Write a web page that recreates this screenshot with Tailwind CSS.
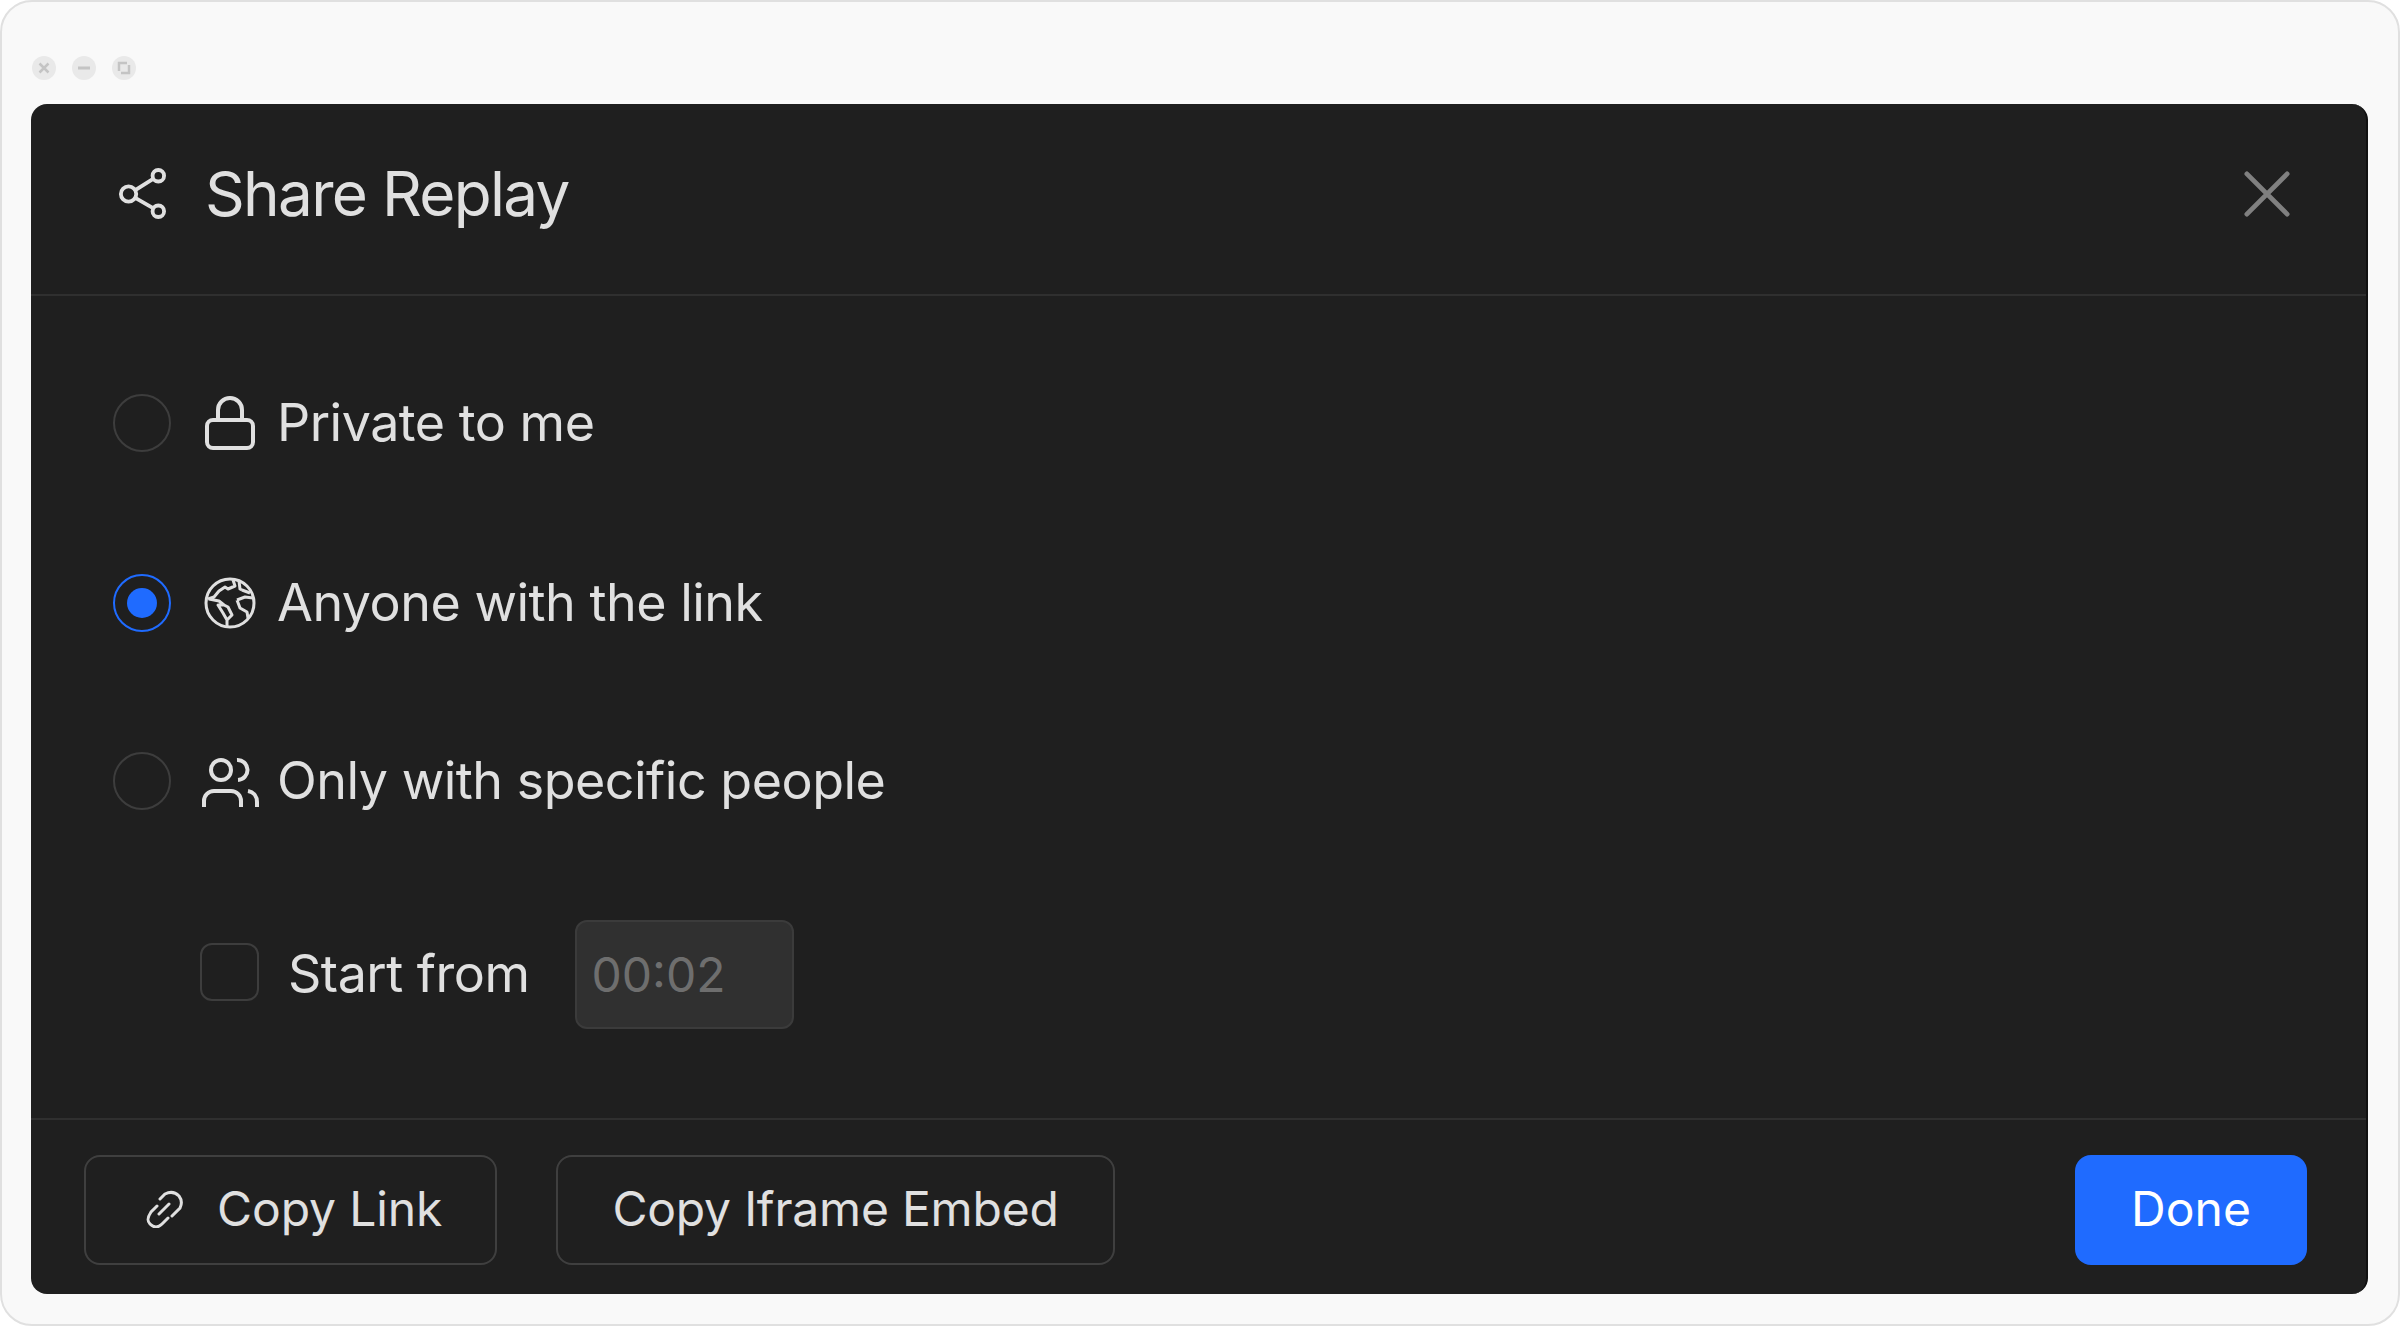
<!DOCTYPE html>
<html>
<head>
<meta charset="utf-8">
<script src="https://cdn.jsdelivr.net/npm/@tailwindcss/browser@4"></script>
</head>
<body class="bg-white font-['Inter',sans-serif]">
<div class="w-[2400px] h-[1326px] box-border bg-[#f9f9f9] border-2 border-[#e0e0e0] rounded-[32px] overflow-hidden flex flex-col">
  <div class="h-[102px] pl-[30px] pt-[54px] flex gap-4 items-start shrink-0">
    <svg width="24" height="24" viewBox="0 0 24 24" class="block"><circle cx="12" cy="12" r="12" fill="#e9e9e9"/><path d="M7.500 7.500l9 9M16.500 7.500l-9 9" stroke="#c4c4c4" stroke-width="2.500" fill="none"/></svg>
    <svg width="24" height="24" viewBox="0 0 24 24" class="block"><circle cx="12" cy="12" r="12" fill="#e9e9e9"/><path d="M6 12h12" stroke="#c4c4c4" stroke-width="3" fill="none"/></svg>
    <svg width="24" height="24" viewBox="0 0 24 24" class="block"><circle cx="12" cy="12" r="12" fill="#e9e9e9"/><path d="M15 7H7v8M9 17h8V9" stroke="#c4c4c4" stroke-width="2.500" fill="none"/></svg>
  </div>
  <div class="ml-[29px] w-[2337px] h-[1190px] bg-[#1f1f1f] rounded-[16px] border-r-2 border-r-[#111111] flex flex-col overflow-hidden shrink-0">
    <div class="h-[192px] shrink-0 border-b-2 border-[#2f2f2f] pl-[87px] pr-[76px] pb-[11px] flex items-center justify-between">
      <div class="flex items-center gap-[39px]">
        <svg width="48" height="54" viewBox="0 0 50 54" fill="none" stroke="#e0e0e0" stroke-width="4" class="block">
          <circle cx="42" cy="8" r="6"/><circle cx="11" cy="27" r="8"/><circle cx="42" cy="45" r="6"/>
          <path d="M18 23L37 11M18 31L37 42"/>
        </svg>
        <span class="text-[62px] leading-none tracking-[-1.7px] text-[#e0e0e0]">Share Replay</span>
      </div>
      <svg width="46" height="46" viewBox="0 0 48 48" fill="none" stroke="#808080" stroke-width="5" stroke-linecap="round" class="block"><path d="M3 3L45 45M45 3L3 45"/></svg>
    </div>
    <div class="h-[822px] shrink-0 pl-[82px] pt-[98px] flex flex-col text-[#e0e0e0]">
      <div class="flex items-center h-[58px]">
        <div class="w-[58px] h-[58px] rounded-full border-2 border-[#3d3d3d] shrink-0"></div>
        <div class="w-[106px] flex justify-center pl-[11px]">
          <svg width="50" height="54" viewBox="0 0 50 54" fill="none" stroke="#e0e0e0" stroke-width="4" class="block"><rect x="2" y="24" width="46" height="28" rx="6"/><path d="M13 24V14a12 12 0 0 1 24 0v10"/></svg>
        </div>
        <span class="text-[52px] leading-none tracking-[-0.5px]">Private to me</span>
      </div>
      <div class="flex items-center h-[58px] mt-[122px]">
        <div class="w-[58px] h-[58px] rounded-full border-2 border-[#1f6bff] shrink-0 flex items-center justify-center"><div class="w-[30px] h-[30px] rounded-full bg-[#1f6bff]"></div></div>
        <div class="w-[106px] flex justify-center pl-[11px]">
          <svg width="52" height="52" viewBox="0 0 52 52" fill="none" stroke="#e0e0e0" stroke-width="3" stroke-linejoin="round" class="block"><circle cx="26" cy="26" r="24"/><path d="M29 3l2 6-7 3-3-2-6 4-5 6-6 2M5 22l10 2 5 4-6 0 5 8 4 7 5-5-4-8-4-2M23 43v6M33 23l8-3 8 1M33 23l3 8 7 4 1 6M38 13l8 3M35 4l1 8 2 1"/></svg>
        </div>
        <span class="text-[52px] leading-none tracking-[-0.5px]">Anyone with the link</span>
      </div>
      <div class="flex items-center h-[58px] mt-[120px]">
        <div class="w-[58px] h-[58px] rounded-full border-2 border-[#3d3d3d] shrink-0"></div>
        <div class="w-[106px] flex justify-center pl-[11px]">
          <svg width="58" height="54" viewBox="0 0 58 54" fill="none" stroke="#e0e0e0" stroke-width="4" class="block"><circle cx="20" cy="16" r="10"/><path d="M36 6a10 10 0 0 1 1 20M3 53V47a10 10 0 0 1 10-10h17a10 10 0 0 1 10 10v6M47 37c6 1 9 6 9 11v5"/></svg>
        </div>
        <span class="text-[52px] leading-none tracking-[-0.5px]">Only with specific people</span>
      </div>
      <div class="flex items-center mt-[110px] pl-[87px] h-[109px]">
        <div class="w-[59px] h-[58px] mb-[5px] rounded-[12px] border-2 border-[#3d3d3d] shrink-0"></div>
        <span class="text-[52px] leading-none tracking-[-0.5px] ml-[29px] mb-[2px]">Start from</span>
        <div class="ml-[45px] w-[219px] h-[109px] rounded-[12px] bg-[#303030] border-2 border-[#3b3b3b] pl-[15px] flex items-center text-[48px] leading-none text-[#6e6e6e]">00:02</div>
      </div>
    </div>
    <div class="flex-1 border-t-2 border-[#2f2f2f] pl-[53px] pr-[59px] pt-[6px] flex items-center justify-between">
      <div class="flex items-center gap-[59px]">
        <div class="w-[413px] h-[110px] rounded-[16px] border-2 border-[#3f3f3f] pb-[2px] flex items-center pl-[59px] gap-[34px] text-[#e0e0e0] text-[48px] leading-none">
          <svg width="38" height="38" viewBox="0 0 38 38" fill="none" stroke="#e0e0e0" stroke-width="3" stroke-linecap="round" class="block"><path d="M15 9l5-5c6-3 10-2 14 2 3 4 3 8 1 12l-8 8M12 16l-6 6c-4 6-4 9-1 12 4 4 8 4 12 0l6-6M14 24l10-10"/></svg>
          <span class="tracking-[-0.1px]">Copy Link</span>
        </div>
        <div class="w-[559px] h-[110px] rounded-[16px] border-2 border-[#3f3f3f] pb-[2px] flex items-center justify-center text-[#e0e0e0] text-[48px] tracking-[-0.2px] leading-none">Copy Iframe Embed</div>
      </div>
      <div class="w-[232px] h-[110px] rounded-[16px] bg-[#1f6bff] pb-[2px] flex items-center justify-center text-white text-[48px] leading-none">Done</div>
    </div>
  </div>
</div>
</body>
</html>
